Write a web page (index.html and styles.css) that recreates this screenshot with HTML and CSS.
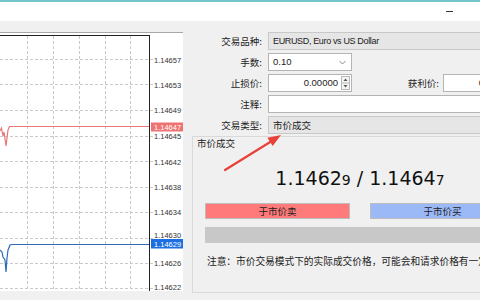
FILE: index.html
```html
<!DOCTYPE html>
<html lang="zh-CN">
<head>
<meta charset="utf-8">
<title>交易</title>
<link rel="stylesheet" href="styles.css">
</head>
<body>
<div class="topline"></div>
<div class="titlebar"><span class="min"></span></div>
<div class="main">
  <div class="chart">
    <svg width="184" height="259" viewBox="0 0 184 259">
      <rect x="0" y="0" width="183" height="259" fill="#fff"/>
      <line x1="0" y1="0.5" x2="183" y2="0.5" stroke="#a8a8a8"/>
      <g stroke="#c9c9c9" stroke-dasharray="3 2" stroke-width="1">
        <line x1="0" y1="27.5" x2="153" y2="27.5"/>
        <line x1="0" y1="52.5" x2="153" y2="52.5"/>
        <line x1="0" y1="78.5" x2="153" y2="78.5"/>
        <line x1="0" y1="104.5" x2="153" y2="104.5"/>
        <line x1="0" y1="129.5" x2="153" y2="129.5"/>
        <line x1="0" y1="155.5" x2="153" y2="155.5"/>
        <line x1="0" y1="180.5" x2="153" y2="180.5"/>
        <line x1="0" y1="206.5" x2="153" y2="206.5"/>
        <line x1="0" y1="231.5" x2="153" y2="231.5"/>
        <line x1="0" y1="256.5" x2="153" y2="256.5"/>
        <line x1="27.5" y1="4" x2="27.5" y2="259"/>
        <line x1="53.5" y1="4" x2="53.5" y2="259"/>
        <line x1="79.5" y1="4" x2="79.5" y2="259"/>
        <line x1="105.5" y1="4" x2="105.5" y2="259"/>
        <line x1="130.5" y1="4" x2="130.5" y2="259"/>
      </g>
      <line x1="0" y1="3.5" x2="149.5" y2="3.5" stroke="#222"/>
      <line x1="149.5" y1="3" x2="149.5" y2="259" stroke="#222"/>
      <polyline points="0,99 1.5,96 3,104 4,100 6,114 8,98 9.5,94.5 149,94.5" fill="none" stroke="#e87878" stroke-width="1.2"/>
      <polyline points="0,218 2,220 3,225 5,228 6,240 7,226 8,218 10,213 12,212.5 149,212.5" fill="none" stroke="#2d6cb4" stroke-width="1.2"/>
      <g class="scale">
        <text x="154" y="30.7">1.14657</text>
        <text x="154" y="55.7">1.14653</text>
        <text x="154" y="80.7">1.14649</text>
        <text x="154" y="106.7">1.14645</text>
        <text x="154" y="132.7">1.14642</text>
        <text x="154" y="157.7">1.14638</text>
        <text x="154" y="182.7">1.14634</text>
        <text x="154" y="206">1.14630</text>
        <text x="154" y="233.7">1.14626</text>
        <text x="154" y="257.5">1.14622</text>
      </g>
      <rect x="151" y="90.5" width="32" height="9" fill="#ef7272"/>
      <text class="tag" x="154" y="97.8">1.14647</text>
      <rect x="151" y="207" width="32" height="9.5" fill="#1b6fe0"/>
      <text class="tag" x="154" y="214.6">1.14629</text>
    </svg>
  </div>
  <div class="panel">
    <div class="form">
      <div class="lbl">交易品种:</div>
      <div class="field gray sym">EURUSD, Euro vs US Dollar</div>

      <div class="lbl">手数:</div>
      <div class="row">
        <div class="field combo"><span class="num">0.10</span>
          <svg width="7" height="5" viewBox="0 0 7 5"><polyline points="0.5,1 3.5,4 6.5,1" fill="none" stroke="#8a8a8a" stroke-width="1"/></svg>
        </div>
      </div>

      <div class="lbl">止损价:</div>
      <div class="row">
        <div class="field spin"><span class="num">0.00000</span>
          <svg width="9" height="14" viewBox="0 0 9 14"><rect x="0.5" y="0.5" width="8" height="13" fill="#f4f4f4" stroke="#b8b8b8"/><line x1="1" y1="7" x2="8" y2="7" stroke="#b8b8b8"/><polygon points="2.5,5 4.5,2.5 6.5,5" fill="#555"/><polygon points="2.5,9 4.5,11.5 6.5,9" fill="#555"/></svg>
        </div>
        <div class="lbl tp-lbl">获利价:</div>
        <div class="field spin"><span class="num">0.00000</span>
          <svg width="9" height="14" viewBox="0 0 9 14"><rect x="0.5" y="0.5" width="8" height="13" fill="#f4f4f4" stroke="#b8b8b8"/><line x1="1" y1="7" x2="8" y2="7" stroke="#b8b8b8"/><polygon points="2.5,5 4.5,2.5 6.5,5" fill="#555"/><polygon points="2.5,9 4.5,11.5 6.5,9" fill="#555"/></svg>
        </div>
      </div>

      <div class="lbl">注释:</div>
      <div class="field"></div>

      <div class="lbl">交易类型:</div>
      <div class="field gray cjk">市价成交</div>
    </div>

    <div class="group">
      <div class="gtitle">市价成交</div>
      <div class="quote">1.1462<span class="sm">9</span> / 1.1464<span class="sm">7</span></div>
      <div class="btns">
        <div class="btn sell">于市价卖</div>
        <div class="btn buy">于市价买</div>
      </div>
      <div class="bar"></div>
      <div class="note">注意：市价交易模式下的实际成交价格，可能会和请求价格有一定的偏差。</div>
    </div>
  </div>
</div>
<svg class="arrow" width="480" height="300" viewBox="0 0 480 300">
  <line x1="225" y1="170" x2="271" y2="141.5" stroke="#e8413a" stroke-width="2.2" stroke-linecap="round"/>
  <polygon points="281,135 267.4,137.7 272.7,146.1" fill="#e8413a"/>
</svg>
</body>
</html>
```

FILE: styles.css
```css
* {
  box-sizing: border-box;
}

body {
  margin: 0;
  width: 480px;
  height: 300px;
  overflow: hidden;
  position: relative;
  background: #f0f0f0;
  color: #222;
  font-family: "Liberation Sans", "Noto Sans CJK SC", sans-serif;
}

.topline {
  height: 2px;
  background: #72c6c8;
}

.titlebar {
  height: 19px;
  background: #fff;
  display: flex;
  justify-content: flex-end;
  align-items: center;
  padding-right: 27px;
}

.min {
  display: block;
  width: 7px;
  height: 1px;
  background: #333;
}

.main {
  display: flex;
  height: 279px;
}

.chart {
  width: 184px;
  height: 259px;
  margin-top: 11px;
  flex-shrink: 0;
}

.chart svg {
  display: block;
}

.scale text,
.tag {
  font-family: "Liberation Sans", sans-serif;
  font-size: 7.5px;
  fill: #333;
}

.tag {
  fill: #fff;
}

.panel {
  width: 340px;
  flex-shrink: 0;
  margin-left: 6px;
  padding-top: 11px;
}

.form {
  display: grid;
  grid-template-columns: 72px 1fr;
  column-gap: 6px;
  row-gap: 3px;
  grid-auto-rows: 18px;
}

.lbl {
  font-family: "Noto Sans CJK SC", sans-serif;
  font-size: 9.5px;
  line-height: 18px;
  text-align: right;
  white-space: nowrap;
}

.field {
  height: 18px;
  border: 1px solid #b4b4b4;
  background: #fff;
  font-size: 9.5px;
  line-height: 16px;
  padding: 0 4px;
  white-space: nowrap;
  overflow: hidden;
}

.field.gray {
  background: #e6e6e6;
  border-color: #c8c8c8;
}

.sym {
  font-size: 9px;
  letter-spacing: -0.35px;
}

.cjk {
  font-family: "Noto Sans CJK SC", sans-serif;
}

.row {
  display: flex;
  align-items: center;
}

.combo {
  width: 84px;
  display: flex;
  justify-content: space-between;
  align-items: center;
  padding-right: 5px;
}

.combo svg,
.spin svg {
  display: block;
}

.spin {
  width: 84px;
  display: flex;
  justify-content: flex-end;
  align-items: center;
  gap: 3px;
  padding-right: 1px;
}

.tp-lbl {
  width: 87px;
  margin-right: 4px;
  flex-shrink: 0;
}

.group {
  margin: 2px 0 0 2px;
  width: 336px;
  height: 157px;
  border: 1px solid #d9d9d9;
}

.gtitle {
  font-family: "Noto Sans CJK SC", sans-serif;
  font-size: 9.5px;
  line-height: 13px;
  padding-left: 4px;
}

.quote {
  margin-top: 16px;
  height: 24px;
  line-height: 24px;
  text-align: center;
  font-family: "DejaVu Sans", sans-serif;
  font-size: 19px;
  color: #111;
}

.quote .sm {
  font-size: 14px;
}

.btns {
  display: flex;
  gap: 20px;
  margin: 13px 12px 0;
}

.btn {
  flex: 1;
  height: 16px;
  border: 1px solid #bdbdbd;
  font-family: "Noto Sans CJK SC", sans-serif;
  font-size: 9.5px;
  line-height: 14px;
  text-align: center;
  color: #222;
}

.sell {
  background: #ff7a7a;
}

.buy {
  background: #9bb8f7;
}

.bar {
  margin: 8px 12px 0;
  height: 16px;
  background: #c8c8c8;
}

.note {
  margin: 11px 0 0 14px;
  font-family: "Noto Sans CJK SC", sans-serif;
  font-size: 9.7px;
  line-height: 14px;
  white-space: nowrap;
}

.arrow {
  position: absolute;
  left: 0;
  top: 0;
  pointer-events: none;
}
```
